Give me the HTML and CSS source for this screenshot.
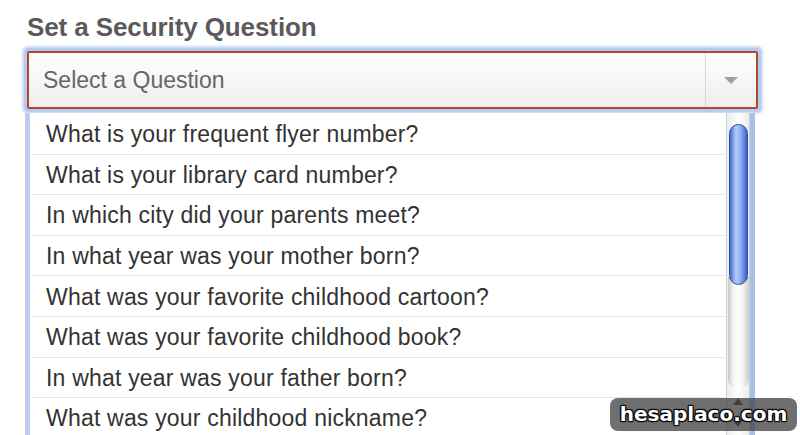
FILE: index.html
```html
<!DOCTYPE html>
<html>
<head>
<meta charset="utf-8">
<link rel="stylesheet" href="styles.css">
</head>
<body>
<div class="page">
  <h1 class="title">Set a Security Question</h1>
  <div class="field">
    <div class="select">
      <span class="select-text">Select a Question</span>
      <span class="select-btn"><span class="caret"></span></span>
    </div>
    <div class="dropdown">
      <ul class="rows">
        <li class="row">What is your frequent flyer number?</li>
        <li class="row">What is your library card number?</li>
        <li class="row">In which city did your parents meet?</li>
        <li class="row">In what year was your mother born?</li>
        <li class="row">What was your favorite childhood cartoon?</li>
        <li class="row">What was your favorite childhood book?</li>
        <li class="row">In what year was your father born?</li>
        <li class="row">What was your childhood nickname?</li>
      </ul>
      <div class="scrollbar">
        <div class="thumb"></div>
        <div class="track-pill"></div>
        <div class="arrows">
          <span class="arr up"></span>
          <span class="arr down"></span>
        </div>
      </div>
    </div>
  </div>
</div>
<div class="watermark">hesaplaco.com</div>
</body>
</html>
```
FILE: styles.css
```css
html, body {
  margin: 0;
  padding: 0;
  background: #ffffff;
  overflow: hidden;
  height: 435px;
}
.page {
  padding: 11px 0 0 27px;
  font-family: "Liberation Sans", Arial, sans-serif;
}
.title {
  margin: 0 0 8px 0;
  font-size: 26px;
  line-height: 32px;
  font-weight: bold;
  color: #5a5a5a;
  letter-spacing: -0.1px;
}
.field {
  width: 731px;
}
.select {
  box-sizing: border-box;
  height: 58px;
  display: flex;
  align-items: stretch;
  border: 2px solid #b4442f;
  border-radius: 2px;
  background: linear-gradient(#ffffff, #ededed);
  box-shadow: 0 0 0 3px #b6cbf1, 0 0 2px 5px rgba(170,195,240,0.6);
}
.select-text {
  flex: 1;
  display: flex;
  align-items: center;
  padding-left: 14px;
  font-size: 23px;
  color: #666666;
}
.select-btn {
  width: 50px;
  border-left: 1px solid #d8d8d8;
  display: flex;
  align-items: center;
  justify-content: center;
}
.caret {
  width: 0;
  height: 0;
  border-left: 7px solid transparent;
  border-right: 7px solid transparent;
  border-top: 7px solid #a0a0a0;
}
.dropdown {
  margin-top: 4px;
  display: flex;
  height: 330px;
  border-left: 5px solid #bccdef;
  border-right: 5px solid #a9c0ee;
  width: 720px;
  margin-left: -2px;
  background: #fff;
}
.rows {
  list-style: none;
  margin: 0;
  padding: 1px 0 0 1px;
  flex: 1;
}
.row {
  box-sizing: border-box;
  height: 40.6px;
  border-bottom: 1px solid #e6e6e6;
  padding-left: 15px;
  padding-top: 2px;
  display: flex;
  align-items: center;
  font-size: 23px;
  letter-spacing: 0.2px;
  color: #333333;
}
.scrollbar {
  width: 24px;
  margin-left: 1px;
  border-left: 1px solid #d0d0d0;
  border-right: 1px solid #d0d0d0;
  background: linear-gradient(90deg, #ececec, #ffffff 50%, #ececec);
  display: flex;
  flex-direction: column;
  align-items: center;
  padding-top: 11px;
  box-sizing: border-box;
}
.thumb {
  position: relative;
  z-index: 1;
  width: 19px;
  height: 161px;
  border-radius: 10px;
  border: 1px solid #34509a;
  box-sizing: border-box;
  background: linear-gradient(90deg, #3e68d8, #b6cdf8 35%, #8fb1f3 60%, #3a62cf);
}
.track-pill {
  width: 21px;
  height: 112px;
  margin-top: -8px;
  border-radius: 0 0 10px 10px;
  background: linear-gradient(90deg, #c8c8c8, #f4f4f4 25%, #ffffff 50%, #f0f0f0 75%, #cacaca);
}
.arrows {
  margin-top: 9px;
  display: flex;
  flex-direction: column;
  align-items: center;
  gap: 15px;
}
.arr {
  width: 0;
  height: 0;
  border-left: 5px solid transparent;
  border-right: 5px solid transparent;
}
.arr.up { border-bottom: 7px solid #2b2b2b; }
.arr.down { border-top: 7px solid #2b2b2b; }
.watermark {
  position: absolute;
  left: 610px;
  top: 398px;
  width: 187px;
  height: 33px;
  border-radius: 8px;
  background: rgba(70,70,70,0.78);
  color: #ffffff;
  font-family: "DejaVu Sans", sans-serif;
  font-weight: bold;
  font-size: 20px;
  line-height: 33px;
  text-align: center;
  text-shadow: 1px 1px 1px #000, -1px -1px 1px #000, 1px -1px 1px #000, -1px 1px 1px #000;
}
```
